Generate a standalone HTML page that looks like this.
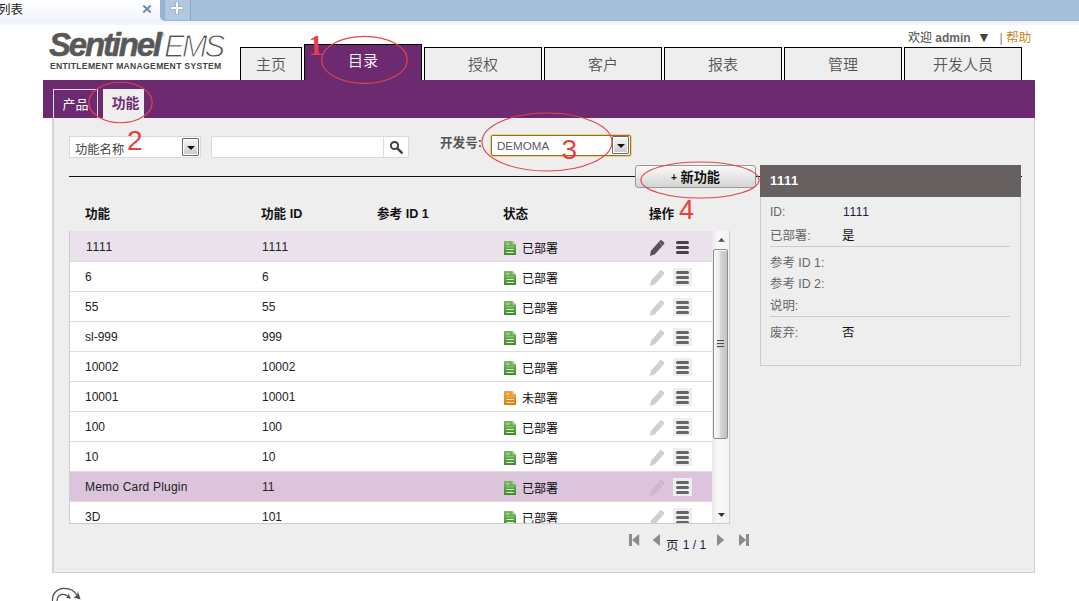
<!DOCTYPE html>
<html lang="zh-CN">
<head>
<meta charset="utf-8">
<title>列表</title>
<style>
*{box-sizing:border-box;margin:0;padding:0}
html,body{width:1079px;height:601px;overflow:hidden;background:#fff}
body{position:relative;font-family:"Liberation Sans","Noto Sans CJK SC",sans-serif;font-size:12px;color:#222}
.abs{position:absolute}
/* browser chrome */
#chromebg{left:0;top:0;width:1079px;height:25px;background:linear-gradient(#fff,#f7f9fc 50%,#eef2f8 85%,#f4f6fa)}
#chrome{left:160px;top:0;width:919px;height:21px;background:linear-gradient(90deg,#98b5d2 4px,#a5c0d9 4px);border-radius:0 0 0 5px;border-bottom:1px solid #9db9d4}
#btab{left:0;top:0;width:160px;height:22px}
#btab span{position:absolute;left:-2px;top:1px;font-size:12.5px;line-height:18px;color:#222}
#bplus{left:164px;top:0;width:27px;height:20px;background:#b1c9e0;border-left:1px solid #92afcc;border-right:1px solid #87a5c4}
/* logo */
#logo1{left:49px;top:24.5px;font-size:33px;line-height:40px;font-weight:bold;font-style:italic;color:#585858;letter-spacing:-2.2px;white-space:nowrap;-webkit-text-stroke:.5px #585858}
#logo2{left:164px;top:29.6px;font-size:31px;line-height:34px;font-style:italic;color:#505050;letter-spacing:-3px;font-weight:normal;white-space:nowrap;-webkit-text-stroke:1px #fff}
#logo4{left:160px;top:31px;font-size:6px;line-height:8px;color:#666;font-style:italic}
#logo3{left:50px;top:60.5px;font-size:8.6px;line-height:10px;font-weight:bold;color:#444;letter-spacing:.3px;white-space:nowrap}
/* nav */
.nav{top:47px;height:33px;background:#eee;border:1px solid #000;border-bottom:none;font-size:15px;line-height:33px;text-align:center;color:#555;font-weight:350}
.nav.on{top:44px;height:37px;background:#6c2a70;color:#fff;line-height:32px}
#bar{left:43px;top:80px;width:992px;height:38px;background:#6c2a70}
#welcome{left:908px;top:29px;font-size:12px;line-height:16px;color:#444;white-space:nowrap}
#welcome b{color:#666}
#help{left:999.500px;top:29.500px;font-size:12.5px;line-height:16px;color:#c8861c;white-space:nowrap}
.sub{top:89px;height:29px;font-size:12px;line-height:29px;text-align:center}
#sub1{left:53px;width:45px;border:1px solid #ddd;border-bottom:none;color:#fff;font-size:13px}
#sub2{left:103px;width:41px;background:#eee;color:#6c2a70;font-weight:bold;padding-left:4px;font-size:13.8px;line-height:30px}
#panel{left:52px;top:118px;width:983px;height:455px;background:#eee;border:1px solid #d4d2d4;border-left:2px solid #d6d3d6;border-top:none}

/* filter row */
.sel{background:#fff;border:1px solid #d9d9d9;font-size:12px;line-height:20px;color:#333;white-space:nowrap}
.ddb{width:17px;height:18px;background:linear-gradient(#f6f6f6,#e2e2e2 50%,#c8c8c8);border:1px solid #6a6a6a;border-radius:1px;box-shadow:inset 0 0 0 1px #fff}
.ddb:after{content:"";position:absolute;left:3.5px;top:7px;border:4px solid transparent;border-top:4px solid #111;border-bottom:none}
#sel1{left:69px;top:136px;width:132px;height:22px;padding-left:5px;line-height:26px;overflow:hidden;font-size:12.3px;color:#444}
#inp{left:211px;top:136px;width:198px;height:22px;background:#fff;border:1px solid #d9d9d9;border-radius:2px}
#inpdiv{left:383px;top:137px;width:1px;height:20px;background:#ddd}
#lbl{left:440px;top:134px;font-size:12.6px;line-height:18px;font-weight:bold;color:#555;white-space:nowrap}
#sel2{left:491px;top:135px;width:140px;height:21px;border:1px solid #96702a;box-shadow:0 0 0 1px #f2cf85;border-radius:2px;padding-left:5px;color:#5a5a66;line-height:20px;font-size:11.6px}
#hr{left:69px;top:176px;width:953px;height:1px;background:#111}
#newbtn{left:635px;top:165px;width:121px;height:23px;border:1px solid #999;border-radius:3px;background:linear-gradient(#fafafa,#e9e9e9 45%,#d4d4d4);font-size:13.2px;line-height:24.500px;text-align:center;font-weight:bold;color:#111;white-space:nowrap}
/* table */
.th{top:205px;font-size:12.6px;line-height:18px;font-weight:bold;color:#111;white-space:nowrap}
#tbl{left:69px;top:231px;width:661px;height:293px;background:#fff;border:1px solid #ccc;border-top:none;overflow:hidden}
.row{position:relative;height:30px;border-bottom:1px solid #ddd;width:643px;font-size:12px;line-height:30px;color:#222}
.row.sel1{background:#ebe1ec;border-top:1px solid #ebe1ec;height:31px}
.row.hov{background:#dbc4dc}
.row span{position:absolute;top:0;white-space:nowrap}
.c1{left:15px}.c2{left:192px}.row .c4{left:452px;top:1.5px;color:#0a0a0a}
.row.sel1 .c1{left:16px;letter-spacing:.7px}.row.sel1 .c2{letter-spacing:.7px}.row.hov .c1{letter-spacing:.2px}
.doc{position:absolute;left:434px;top:9px;width:12px;height:14px}
.pen{position:absolute;left:579px;top:7px;width:16px;height:18px}
.ham{position:absolute;left:603px;top:6px;width:19px;height:18px;background:#eee}
.row.sel1 .ham{background:transparent}
.ham i{position:absolute;left:3px;width:13px;height:3px;border-radius:1.5px;background:#666}
.row.sel1 .ham i{background:#444}
/* scrollbar */
#sb{left:712px;top:231px;width:17px;height:292px;background:linear-gradient(90deg,#e8e8e8,#f8f8f8 30%,#f4f4f4)}
#thumb{left:713px;top:249px;width:15px;height:190px;border:1px solid #8e8e8e;border-radius:2px;background:linear-gradient(90deg,#f8f8f8 0,#eaeaea 42%,#d4d4d4 52%,#c2c2c2 100%);box-shadow:inset 0 1px 0 #fff}
/* detail */
#dh{left:760px;top:165px;width:261px;height:32px;background:#666060;color:#fff;font-weight:bold;font-size:13px;line-height:31px;padding-left:10px;letter-spacing:.5px}
#db{left:760px;top:197px;width:261px;height:169px;border:1px solid #ccc;border-top:none;background:#eee}
.dl{left:770px;font-size:12.4px;line-height:16px;color:#666;white-space:nowrap}
.dv{left:842px;font-size:12.4px;line-height:16px;color:#111;white-space:nowrap}
.dsep{left:770px;width:240px;height:1px;background:#ccc}
/* pager */
#pg{left:667px;top:536px;font-size:12px;line-height:18px;color:#222;white-space:nowrap}
</style>
</head>
<body>
<svg width="0" height="0" style="position:absolute"><defs><linearGradient id="gg" x1="0" y1="0" x2="0" y2="1"><stop offset="0" stop-color="#7dbb62"/><stop offset="1" stop-color="#3d8a2b"/></linearGradient><linearGradient id="ga" x1="0" y1="0" x2="0" y2="1"><stop offset="0" stop-color="#222"/><stop offset="1" stop-color="#777"/></linearGradient><linearGradient id="go" x1="0" y1="0" x2="0" y2="1"><stop offset="0" stop-color="#f0a63a"/><stop offset="1" stop-color="#d97d10"/></linearGradient></defs></svg>
<div id="chromebg" class="abs"></div>
<div id="chrome" class="abs"></div>
<div id="btab" class="abs"><span>列表</span></div>
<svg class="abs" style="left:142px;top:4px" width="10" height="10" viewBox="0 0 10 10"><path d="M1.300 1.500l7.400 7M8.700 1.500l-7.400 7" stroke="#6f8aa8" stroke-width="1.900" fill="none"/></svg>
<div id="bplus" class="abs"></div>
<svg class="abs" style="left:170px;top:2px" width="14" height="13" viewBox="0 0 14 13"><path d="M7 1.300v10M2 6.200h10" stroke="#8fa6be" stroke-width="3.600" fill="none" stroke-linecap="round"/><path d="M7 1.300v10M2 6.200h10" stroke="#fff" stroke-width="2.200" fill="none" stroke-linecap="round"/></svg>

<div id="logo1" class="abs">Sentinel</div>
<div id="logo2" class="abs">EMS</div>
<div id="logo4" class="abs">®</div>
<div id="logo3" class="abs">ENTITLEMENT MANAGEMENT SYSTEM</div>

<div class="abs nav" style="left:240px;width:62px">主页</div>
<div class="abs nav on" style="left:304px;width:118px">目录</div>
<div class="abs nav" style="left:424px;width:118px">授权</div>
<div class="abs nav" style="left:544px;width:118px">客户</div>
<div class="abs nav" style="left:664px;width:118px">报表</div>
<div class="abs nav" style="left:784px;width:118px">管理</div>
<div class="abs nav" style="left:904px;width:118px">开发人员</div>
<div id="welcome" class="abs">欢迎 <b>admin</b> <span style="font-size:14px;position:relative;top:-0.5px;left:3px;color:#444">▼</span></div>
<div id="help" class="abs"><span style="color:#8a8090">|</span> 帮助</div>

<div id="bar" class="abs"></div>
<div id="sub1" class="abs sub">产品</div>
<div id="sub2" class="abs sub">功能</div>
<div id="panel" class="abs"></div>

<div id="sel1" class="abs sel">功能名称</div>
<div class="abs ddb" style="left:182px;top:138px"></div>
<div id="inp" class="abs"></div>
<div id="inpdiv" class="abs"></div>
<svg class="abs" style="left:389px;top:140px" width="15" height="15" viewBox="0 0 15 15"><circle cx="5.5" cy="5.5" r="3.6" fill="none" stroke="#444" stroke-width="2"/><path d="M8.3 8.3l4.4 4.4" stroke="#444" stroke-width="2.6" stroke-linecap="round"/></svg>
<div id="lbl" class="abs">开发号:</div>
<div id="sel2" class="abs sel">DEMOMA</div>
<div class="abs ddb" style="left:612px;top:136px;height:17.500px"></div>
<div id="hr" class="abs"></div>
<div id="newbtn" class="abs"><span style="font-size:10px;position:relative;top:-1px">+</span> 新功能</div>

<div class="abs th" style="left:85px">功能</div>
<div class="abs th" style="left:261px">功能 ID</div>
<div class="abs th" style="left:377px">参考 ID 1</div>
<div class="abs th" style="left:503px">状态</div>
<div class="abs th" style="left:649px">操作</div>

<div id="tbl" class="abs">
<div class="row sel1"><span class="c1">1111</span><span class="c2">1111</span><svg class="doc" viewBox="0 0 12 14"><path d="M0 0h8.500l3.500 3.500V14H0z" fill="url(#gg)"/><path d="M8.500 0v3.500H12z" fill="#a9d694"/><path d="M2.300 3h3M2.300 8.500h7.500M2.300 11.500h7.500" stroke="#d9f5cc" stroke-width="1.100" fill="none"/><path d="M2.300 5.800h7.500" stroke="#9cc78c" stroke-width="1.100" fill="none"/></svg><span class="c4">已部署</span><svg class="pen" viewBox="0 0 16 18"><g transform="translate(0.900 17) rotate(-48.500)" fill="#555"><path d="M0 0L4.600-2.700H18.300a1.300 1.300 0 0 1 1.300 1.300V1.400a1.300 1.300 0 0 1-1.300 1.300H4.600z"/></g><g transform="translate(0.900 17) rotate(-48.500)"><path d="M16.200-2.700v5.400" stroke="#fff" stroke-opacity=".35" stroke-width=".9"/></g></svg><div class="ham"><i style="top:3px"></i><i style="top:8px"></i><i style="top:13px"></i></div></div>
<div class="row "><span class="c1">6</span><span class="c2">6</span><svg class="doc" viewBox="0 0 12 14"><path d="M0 0h8.500l3.500 3.500V14H0z" fill="url(#gg)"/><path d="M8.500 0v3.500H12z" fill="#a9d694"/><path d="M2.300 3h3M2.300 8.500h7.500M2.300 11.500h7.500" stroke="#d9f5cc" stroke-width="1.100" fill="none"/><path d="M2.300 5.800h7.500" stroke="#9cc78c" stroke-width="1.100" fill="none"/></svg><span class="c4">已部署</span><svg class="pen" viewBox="0 0 16 18"><g transform="translate(0.900 17) rotate(-48.500)" fill="#cfcfcf"><path d="M0 0L4.600-2.700H18.300a1.300 1.300 0 0 1 1.300 1.300V1.400a1.300 1.300 0 0 1-1.300 1.300H4.600z"/></g><g transform="translate(0.900 17) rotate(-48.500)"><path d="M16.200-2.700v5.400" stroke="#fff" stroke-opacity=".35" stroke-width=".9"/></g></svg><div class="ham"><i style="top:3px"></i><i style="top:8px"></i><i style="top:13px"></i></div></div>
<div class="row "><span class="c1">55</span><span class="c2">55</span><svg class="doc" viewBox="0 0 12 14"><path d="M0 0h8.500l3.500 3.500V14H0z" fill="url(#gg)"/><path d="M8.500 0v3.500H12z" fill="#a9d694"/><path d="M2.300 3h3M2.300 8.500h7.500M2.300 11.500h7.500" stroke="#d9f5cc" stroke-width="1.100" fill="none"/><path d="M2.300 5.800h7.500" stroke="#9cc78c" stroke-width="1.100" fill="none"/></svg><span class="c4">已部署</span><svg class="pen" viewBox="0 0 16 18"><g transform="translate(0.900 17) rotate(-48.500)" fill="#cfcfcf"><path d="M0 0L4.600-2.700H18.300a1.300 1.300 0 0 1 1.300 1.300V1.400a1.300 1.300 0 0 1-1.300 1.300H4.600z"/></g><g transform="translate(0.900 17) rotate(-48.500)"><path d="M16.200-2.700v5.400" stroke="#fff" stroke-opacity=".35" stroke-width=".9"/></g></svg><div class="ham"><i style="top:3px"></i><i style="top:8px"></i><i style="top:13px"></i></div></div>
<div class="row "><span class="c1">sl-999</span><span class="c2">999</span><svg class="doc" viewBox="0 0 12 14"><path d="M0 0h8.500l3.500 3.500V14H0z" fill="url(#gg)"/><path d="M8.500 0v3.500H12z" fill="#a9d694"/><path d="M2.300 3h3M2.300 8.500h7.500M2.300 11.500h7.500" stroke="#d9f5cc" stroke-width="1.100" fill="none"/><path d="M2.300 5.800h7.500" stroke="#9cc78c" stroke-width="1.100" fill="none"/></svg><span class="c4">已部署</span><svg class="pen" viewBox="0 0 16 18"><g transform="translate(0.900 17) rotate(-48.500)" fill="#cfcfcf"><path d="M0 0L4.600-2.700H18.300a1.300 1.300 0 0 1 1.300 1.300V1.400a1.300 1.300 0 0 1-1.300 1.300H4.600z"/></g><g transform="translate(0.900 17) rotate(-48.500)"><path d="M16.200-2.700v5.400" stroke="#fff" stroke-opacity=".35" stroke-width=".9"/></g></svg><div class="ham"><i style="top:3px"></i><i style="top:8px"></i><i style="top:13px"></i></div></div>
<div class="row "><span class="c1">10002</span><span class="c2">10002</span><svg class="doc" viewBox="0 0 12 14"><path d="M0 0h8.500l3.500 3.500V14H0z" fill="url(#gg)"/><path d="M8.500 0v3.500H12z" fill="#a9d694"/><path d="M2.300 3h3M2.300 8.500h7.500M2.300 11.500h7.500" stroke="#d9f5cc" stroke-width="1.100" fill="none"/><path d="M2.300 5.800h7.500" stroke="#9cc78c" stroke-width="1.100" fill="none"/></svg><span class="c4">已部署</span><svg class="pen" viewBox="0 0 16 18"><g transform="translate(0.900 17) rotate(-48.500)" fill="#cfcfcf"><path d="M0 0L4.600-2.700H18.300a1.300 1.300 0 0 1 1.300 1.300V1.400a1.300 1.300 0 0 1-1.300 1.300H4.600z"/></g><g transform="translate(0.900 17) rotate(-48.500)"><path d="M16.200-2.700v5.400" stroke="#fff" stroke-opacity=".35" stroke-width=".9"/></g></svg><div class="ham"><i style="top:3px"></i><i style="top:8px"></i><i style="top:13px"></i></div></div>
<div class="row "><span class="c1">10001</span><span class="c2">10001</span><svg class="doc" viewBox="0 0 12 14"><path d="M0 0h8.500l3.500 3.500V14H0z" fill="url(#go)"/><path d="M8.500 0v3.500H12z" fill="#f3cf98"/><path d="M2.300 3h3M2.300 8.500h7.500M2.300 11.500h7.500" stroke="#fdebc8" stroke-width="1.100" fill="none"/><path d="M2.300 5.800h7.500" stroke="#e6b978" stroke-width="1.100" fill="none"/></svg><span class="c4">未部署</span><svg class="pen" viewBox="0 0 16 18"><g transform="translate(0.900 17) rotate(-48.500)" fill="#cfcfcf"><path d="M0 0L4.600-2.700H18.300a1.300 1.300 0 0 1 1.300 1.300V1.400a1.300 1.300 0 0 1-1.300 1.300H4.600z"/></g><g transform="translate(0.900 17) rotate(-48.500)"><path d="M16.200-2.700v5.400" stroke="#fff" stroke-opacity=".35" stroke-width=".9"/></g></svg><div class="ham"><i style="top:3px"></i><i style="top:8px"></i><i style="top:13px"></i></div></div>
<div class="row "><span class="c1">100</span><span class="c2">100</span><svg class="doc" viewBox="0 0 12 14"><path d="M0 0h8.500l3.500 3.500V14H0z" fill="url(#gg)"/><path d="M8.500 0v3.500H12z" fill="#a9d694"/><path d="M2.300 3h3M2.300 8.500h7.500M2.300 11.500h7.500" stroke="#d9f5cc" stroke-width="1.100" fill="none"/><path d="M2.300 5.800h7.500" stroke="#9cc78c" stroke-width="1.100" fill="none"/></svg><span class="c4">已部署</span><svg class="pen" viewBox="0 0 16 18"><g transform="translate(0.900 17) rotate(-48.500)" fill="#cfcfcf"><path d="M0 0L4.600-2.700H18.300a1.300 1.300 0 0 1 1.300 1.300V1.400a1.300 1.300 0 0 1-1.300 1.300H4.600z"/></g><g transform="translate(0.900 17) rotate(-48.500)"><path d="M16.200-2.700v5.400" stroke="#fff" stroke-opacity=".35" stroke-width=".9"/></g></svg><div class="ham"><i style="top:3px"></i><i style="top:8px"></i><i style="top:13px"></i></div></div>
<div class="row "><span class="c1">10</span><span class="c2">10</span><svg class="doc" viewBox="0 0 12 14"><path d="M0 0h8.500l3.500 3.500V14H0z" fill="url(#gg)"/><path d="M8.500 0v3.500H12z" fill="#a9d694"/><path d="M2.300 3h3M2.300 8.500h7.500M2.300 11.500h7.500" stroke="#d9f5cc" stroke-width="1.100" fill="none"/><path d="M2.300 5.800h7.500" stroke="#9cc78c" stroke-width="1.100" fill="none"/></svg><span class="c4">已部署</span><svg class="pen" viewBox="0 0 16 18"><g transform="translate(0.900 17) rotate(-48.500)" fill="#cfcfcf"><path d="M0 0L4.600-2.700H18.300a1.300 1.300 0 0 1 1.300 1.300V1.400a1.300 1.300 0 0 1-1.300 1.300H4.600z"/></g><g transform="translate(0.900 17) rotate(-48.500)"><path d="M16.200-2.700v5.400" stroke="#fff" stroke-opacity=".35" stroke-width=".9"/></g></svg><div class="ham"><i style="top:3px"></i><i style="top:8px"></i><i style="top:13px"></i></div></div>
<div class="row hov"><span class="c1">Memo Card Plugin</span><span class="c2">11</span><svg class="doc" viewBox="0 0 12 14"><path d="M0 0h8.500l3.500 3.500V14H0z" fill="url(#gg)"/><path d="M8.500 0v3.500H12z" fill="#a9d694"/><path d="M2.300 3h3M2.300 8.500h7.500M2.300 11.500h7.500" stroke="#d9f5cc" stroke-width="1.100" fill="none"/><path d="M2.300 5.800h7.500" stroke="#9cc78c" stroke-width="1.100" fill="none"/></svg><span class="c4">已部署</span><svg class="pen" viewBox="0 0 16 18"><g transform="translate(0.900 17) rotate(-48.500)" fill="#c9b9ca"><path d="M0 0L4.600-2.700H18.300a1.300 1.300 0 0 1 1.300 1.300V1.400a1.300 1.300 0 0 1-1.300 1.300H4.600z"/></g><g transform="translate(0.900 17) rotate(-48.500)"><path d="M16.200-2.700v5.400" stroke="#fff" stroke-opacity=".35" stroke-width=".9"/></g></svg><div class="ham"><i style="top:3px"></i><i style="top:8px"></i><i style="top:13px"></i></div></div>
<div class="row "><span class="c1">3D</span><span class="c2">101</span><svg class="doc" viewBox="0 0 12 14"><path d="M0 0h8.500l3.500 3.500V14H0z" fill="url(#gg)"/><path d="M8.500 0v3.500H12z" fill="#a9d694"/><path d="M2.300 3h3M2.300 8.500h7.500M2.300 11.500h7.500" stroke="#d9f5cc" stroke-width="1.100" fill="none"/><path d="M2.300 5.800h7.500" stroke="#9cc78c" stroke-width="1.100" fill="none"/></svg><span class="c4">已部署</span><svg class="pen" viewBox="0 0 16 18"><g transform="translate(0.900 17) rotate(-48.500)" fill="#cfcfcf"><path d="M0 0L4.600-2.700H18.300a1.300 1.300 0 0 1 1.300 1.300V1.400a1.300 1.300 0 0 1-1.300 1.300H4.600z"/></g><g transform="translate(0.900 17) rotate(-48.500)"><path d="M16.200-2.700v5.400" stroke="#fff" stroke-opacity=".35" stroke-width=".9"/></g></svg><div class="ham"><i style="top:3px"></i><i style="top:8px"></i><i style="top:13px"></i></div></div>
</div>
<div id="sb" class="abs"></div>
<div id="thumb" class="abs"></div>
<svg class="abs" style="left:718px;top:238px" width="7" height="4" viewBox="0 0 7 4"><path d="M0 4l3.500-4 3.500 4z" fill="url(#ga)"/></svg>
<svg class="abs" style="left:718px;top:513px" width="7" height="4" viewBox="0 0 7 4"><path d="M0 0l3.5 4 3.500-4z" fill="#333"/></svg>
<svg class="abs" style="left:717px;top:339px" width="8" height="10" viewBox="0 0 8 10"><path d="M0 2.600h7M0 5.600h7M0 8.600h7" stroke="#fff" stroke-width="1"/><path d="M0 1.600h7M0 4.600h7M0 7.600h7" stroke="#4a4a4a" stroke-width="1.300"/></svg>

<div id="dh" class="abs">1111</div>
<div id="db" class="abs"></div>
<div class="abs dl" style="top:204px;font-size:12px">ID:</div><div class="abs dv" style="top:204px;left:843px;font-size:12px;color:#221a44;letter-spacing:.6px">1111</div>
<div class="abs dl" style="top:227.500px">已部署:</div><div class="abs dv" style="top:227.500px">是</div>
<div class="abs dsep" style="top:246px"></div>
<div class="abs dl" style="top:255px">参考 ID 1:</div>
<div class="abs dl" style="top:276px">参考 ID 2:</div>
<div class="abs dl" style="top:297.500px">说明:</div>
<div class="abs dsep" style="top:316px"></div>
<div class="abs dl" style="top:324.500px">废弃:</div><div class="abs dv" style="top:324.500px">否</div>

<svg class="abs" style="left:628px;top:532px" width="124" height="16" viewBox="0 0 124 16"><g fill="#8b8b8b"><path d="M1 2h3v12H1zM11.200 2v12L4 8z"/><path d="M32 2v12L24.700 8z"/><path d="M89 2v12l7.200-6z"/><path d="M111 2v12l7.200-6zM118 2h3v12h-3z"/></g></svg>
<div id="pg" class="abs"><span style="font-size:12.5px;position:relative;top:1px;left:-1px">页</span> <span style="color:#1c1a4a">1 / 1</span></div>

<svg class="abs" style="left:50px;top:586px" width="34" height="15" viewBox="0 0 34 15"><g fill="none" stroke="#4a4a4a" stroke-width="1.2"><path d="M2.500 15C2 8 7 2.300 14 2.300c6 0 11 2.700 13.500 7.700"/><path d="M7 15c0-4 2.500-6.600 5.500-6.600 2.500 0 4.500.900 6 2.100"/></g><path d="M30.600 13.500l-7.100-2 3.500-2 1-4z" fill="#4a4a4a"/><path d="M21 12.800l-5.200-1 2.500-1.600-.1-3z" fill="#4a4a4a"/></svg>

<svg class="abs" style="left:0;top:0;pointer-events:none" width="1079" height="601" viewBox="0 0 1079 601">
<g fill="none" stroke="#e2454c" stroke-width="1.15">
<ellipse cx="364.500" cy="59.900" rx="42.800" ry="23.500"/>
<ellipse cx="120.500" cy="102.500" rx="31.700" ry="20.300"/>
<ellipse cx="547" cy="142" rx="65" ry="29"/>
<ellipse cx="700" cy="180" rx="59" ry="18"/>
</g>
<g fill="#e8404a" font-family="'Liberation Serif',serif" font-size="29" font-weight="bold">
<text x="308.500" y="55">1</text>
</g>
<g fill="#e8403a" font-family="'Liberation Sans','Noto Sans CJK SC',sans-serif" font-size="27" stroke="#e8403a" stroke-width="0">
<text x="127" y="150" font-size="28">2</text>
<text x="561.500" y="158.500" font-size="28">3</text>
<text x="679" y="218.500">4</text>
</g>
</svg>
</body>
</html>
